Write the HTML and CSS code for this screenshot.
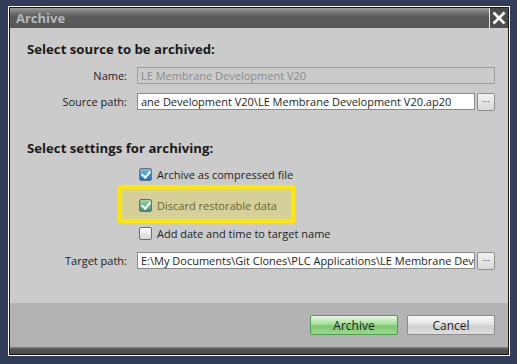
FILE: index.html
```html
<!DOCTYPE html>
<html lang="en">
<head>
    <meta charset="UTF-8">
    <title>Archive</title>
    <link rel="stylesheet" href="styles.css">
</head>
<body>
    <div class="dialog">
        <div class="frame">
            <div class="titlebar">
                <span class="title">Archive</span>
                <div class="close">
                    <svg width="16" height="16" viewBox="0 0 16 16"><path d="M2.5 2.5 L13.5 13.5 M13.5 2.5 L2.5 13.5" stroke="#fff" stroke-width="2.6" fill="none"/></svg>
                </div>
            </div>
            <div class="content">
                <h2 class="section">Select source to be archived:</h2>
                <div class="row">
                    <label class="label">Name:</label>
                    <div class="field disabled wide">LE Membrane Development V20</div>
                </div>
                <div class="row">
                    <label class="label">Source path:</label>
                    <div class="field">ane Development V20\LE Membrane Development V20.ap20</div>
                    <button class="browse">...</button>
                </div>

                <h2 class="section second">Select settings for archiving:</h2>
                <div class="checks">
                    <div class="check"><span class="box checked"></span>Archive as compressed file</div>
                    <div class="check highlighted"><span class="box checked"></span>Discard restorable data</div>
                    <div class="check last"><span class="box"></span>Add date and time to target name</div>
                </div>
                <div class="row">
                    <label class="label">Target path:</label>
                    <div class="field">E:\My Documents\Git Clones\PLC Applications\LE Membrane Development</div>
                    <button class="browse">...</button>
                </div>
            </div>
            <div class="footer">
                <button class="btn primary">Archive</button>
                <button class="btn">Cancel</button>
            </div>
            <div class="bottom"></div>
        </div>
    </div>
</body>
</html>
```

FILE: styles.css
```css
body {
    margin: 0;
    background: #333d5a;
    font-family: "Open Sans", "Noto Sans", sans-serif;
    font-size: 11px;
    color: #1e1e1e;
}

.dialog {
    width: 500px;
    margin: 6px 0 0 8px;
    border: 1px solid #fff;
}

.frame {
    border: 1px solid #1a1a1a;
    border-bottom: none;
}

.titlebar {
    display: flex;
    justify-content: space-between;
    height: 20px;
    background: linear-gradient(#9a9a9a, #6a6a6a 30%, #5a5a5a 45%, #575757);
}

.title {
    padding-left: 6px;
    line-height: 20px;
    font-weight: bold;
    font-size: 13px;
    color: #b9b9b9;
}

.close {
    width: 18px;
    display: flex;
    align-items: center;
    justify-content: center;
    background: #4c4c4c;
    border-left: 1px solid #e8e8e8;
}

.content {
    background: #cbcbcb;
    height: 275px;
    padding: 12px 0 0 17px;
    box-sizing: border-box;
}

.section {
    margin: 0 0 8px 0;
    font-size: 13.2px;
    font-weight: bold;
    color: #1a1a1a;
    line-height: 18px;
}

.section.second {
    margin-top: 28px;
    margin-bottom: 9px;
}

.row {
    display: flex;
    align-items: center;
    height: 19px;
    margin-bottom: 7px;
}

.label {
    width: 100px;
    text-align: right;
    margin-right: 10px;
    color: #222;
}

.field {
    width: 338px;
    height: 17px;
    line-height: 15px;
    box-sizing: border-box;
    padding-left: 3px;
    background: #fff;
    border: 1px solid #8a8a8a;
    white-space: nowrap;
    overflow: hidden;
}

.field.wide {
    width: 358px;
}

.field.disabled {
    background: #cbcbcb;
    border-color: #9c9c9c;
    color: #8b8b8b;
}

.browse {
    width: 18px;
    height: 18px;
    margin-left: 2px;
    padding: 0 0 6px 0;
    font-size: 9px;
    line-height: 8px;
    color: #333;
    border: 1px solid #8e8e8e;
    border-radius: 2px;
    background: linear-gradient(#f2f2f2, #d8d8d8);
}

.checks {
    display: flex;
    flex-direction: column;
    padding-left: 112px;
}

.check {
    position: relative;
    display: flex;
    align-items: center;
    height: 16px;
    margin-bottom: 13px;
    color: #1e1e1e;
}

.check.highlighted {
    margin: 2px 0 12px 0;
}

.check.last {
    margin-bottom: 10px;
}

.highlighted::before {
    content: "";
    position: absolute;
    left: -21px;
    top: -12px;
    width: 169px;
    height: 30px;
    border: 4px solid #ffe800;
    background: rgba(232, 218, 60, 0.35);
}

.box {
    position: relative;
    width: 11px;
    height: 11px;
    margin-right: 5px;
    border: 1px solid #6e6e6e;
    border-radius: 2px;
    background: linear-gradient(#fdfdfd, #d6d6d6);
}

.box.checked {
    background: linear-gradient(#6fc1f2, #1d6cc4);
}

.box.checked::after {
    content: "";
    position: absolute;
    left: 3px;
    top: 0;
    width: 4px;
    height: 7px;
    border: solid #fff;
    border-width: 0 2px 2px 0;
    transform: rotate(40deg);
}

.highlighted .box.checked {
    background: linear-gradient(#9fd7b0, #3f8f70);
}

.footer {
    display: flex;
    justify-content: flex-end;
    align-items: center;
    gap: 9px;
    height: 44px;
    padding-right: 13px;
    background: #b3b3b3;
}

.btn {
    width: 88px;
    height: 20px;
    font-family: inherit;
    font-size: 12px;
    color: #1e1e1e;
    border: 1px solid #8c8c8c;
    border-radius: 2px;
    background: linear-gradient(#fafafa, #e4e4e4 45%, #cfcfcf 55%, #dedede);
}

.btn.primary {
    border-color: #4f9f4f;
    background: linear-gradient(#e8f8e4, #a6e09c 45%, #7cc870 55%, #9ad88e);
}

.bottom {
    height: 7px;
    background: linear-gradient(#8a8a8a, #525252 30%, #4e4e4e);
    border-bottom: 1px solid #111;
}
```
